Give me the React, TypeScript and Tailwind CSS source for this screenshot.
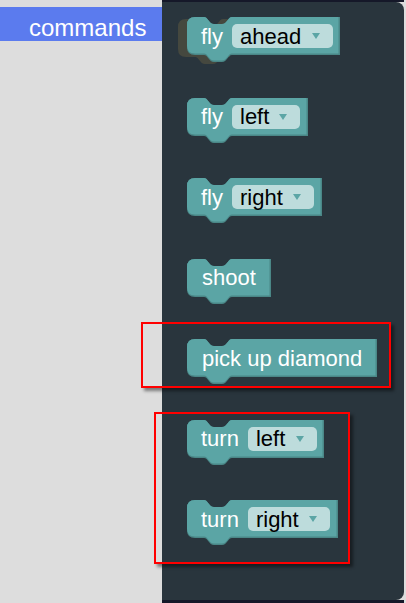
import React from "react";

type BlockSpec = {
  label: string;
  width: number;
  option?: string;
  optionWidth?: number;
  ghost?: boolean;
};

const blocks: BlockSpec[] = [
  { label: "fly", width: 153, option: "ahead", optionWidth: 101, ghost: true },
  { label: "fly", width: 121, option: "left", optionWidth: 68 },
  { label: "fly", width: 135, option: "right", optionWidth: 82 },
  { label: "shoot", width: 84 },
  { label: "pick up diamond", width: 190 },
  { label: "turn", width: 137, option: "left", optionWidth: 69 },
  { label: "turn", width: 151, option: "right", optionWidth: 82 },
];

// block outline: rounded left corners, notch on top, tab underneath
const blockPath = (w: number, h: number) => {
  const r = 8;
  const nx = 17;
  const nw = 28;
  const d = 7;
  return [
    `M0,${r}`,
    `Q0,0 ${r},0`,
    `L${nx},0`,
    `C${nx + 4},0 ${nx + 5},${d} ${nx + 10},${d}`,
    `L${nx + nw - 10},${d}`,
    `C${nx + nw - 5},${d} ${nx + nw - 4},0 ${nx + nw},0`,
    `L${w},0`,
    `L${w},${h}`,
    `L${nx + nw},${h}`,
    `C${nx + nw - 4},${h} ${nx + nw - 5},${h + d} ${nx + nw - 10},${h + d}`,
    `L${nx + 10},${h + d}`,
    `C${nx + 5},${h + d} ${nx + 4},${h} ${nx},${h}`,
    `L${r},${h}`,
    `Q0,${h} 0,${h - r}`,
    "Z",
  ].join(" ");
};

function Block({ spec }: { spec: BlockSpec }) {
  const { label, width, option, optionWidth, ghost } = spec;
  return (
    <div className="relative h-[38px] shrink-0" style={{ width }}>
      <svg
        className="absolute left-0 top-0 overflow-visible"
        width={width}
        height={46}
      >
        {ghost && (
          <path d={blockPath(52, 38)} transform="translate(-9,2)" fill="#45483f" />
        )}
        <path d={blockPath(width, 38)} fill="#4a8787" />
        <path d={blockPath(width - 1.5, 36.5)} fill="#5ba5a5" />
      </svg>
      <div
        className={
          option
            ? "relative flex h-full items-center gap-[9px] pl-[14px] text-[22px] text-white"
            : "relative flex h-full items-center pl-[15px] text-[22px] text-white"
        }
      >
        <span className="whitespace-nowrap">{label}</span>
        {option && (
          <div
            className="flex h-[24px] items-center justify-between rounded-[5px] bg-[#bddcdc] pl-[8px] pr-[13px] text-black"
            style={{ width: optionWidth }}
          >
            <span>{option}</span>
            <svg width="8" height="6" viewBox="0 0 8 6">
              <polygon points="0,0 8,0 4,6" fill="#5ba5a5" />
            </svg>
          </div>
        )}
      </div>
    </div>
  );
}

export default function App() {
  return (
    <div className="relative flex h-[603px] w-[406px] overflow-hidden bg-[#dddddd] font-['Liberation_Sans',Arial,sans-serif]">
      {/* Category list */}
      <aside className="w-[162px] shrink-0 pt-[7px]">
        <div className="h-[34px] bg-[#5b7bee] pl-[29px] pt-[9px] text-[24px] leading-[24px] text-white">
          commands
        </div>
      </aside>

      {/* Flyout */}
      <div className="flex w-[242px] shrink-0 flex-col">
        <div className="h-[2px] bg-[#151829]" />
        <main className="flex-1 rounded-r-[8px] bg-[#29353d]">
          <div className="flex flex-col items-start gap-[42.5px] pl-[25px] pt-[15px]">
            {blocks.map((b, i) => (
              <Block key={i} spec={b} />
            ))}
          </div>
        </main>
        <div className="h-[3px] bg-[#151829]" />
      </div>

      {/* Annotation boxes */}
      <div className="absolute left-[141px] top-[322px] h-[66px] w-[250px] border-2 border-[#ff0000] shadow-[3px_3px_3px_rgba(0,0,0,0.45)]" />
      <div className="absolute left-[154px] top-[412px] h-[152px] w-[196px] border-2 border-[#ff0000] shadow-[3px_3px_3px_rgba(0,0,0,0.45)]" />
    </div>
  );
}
